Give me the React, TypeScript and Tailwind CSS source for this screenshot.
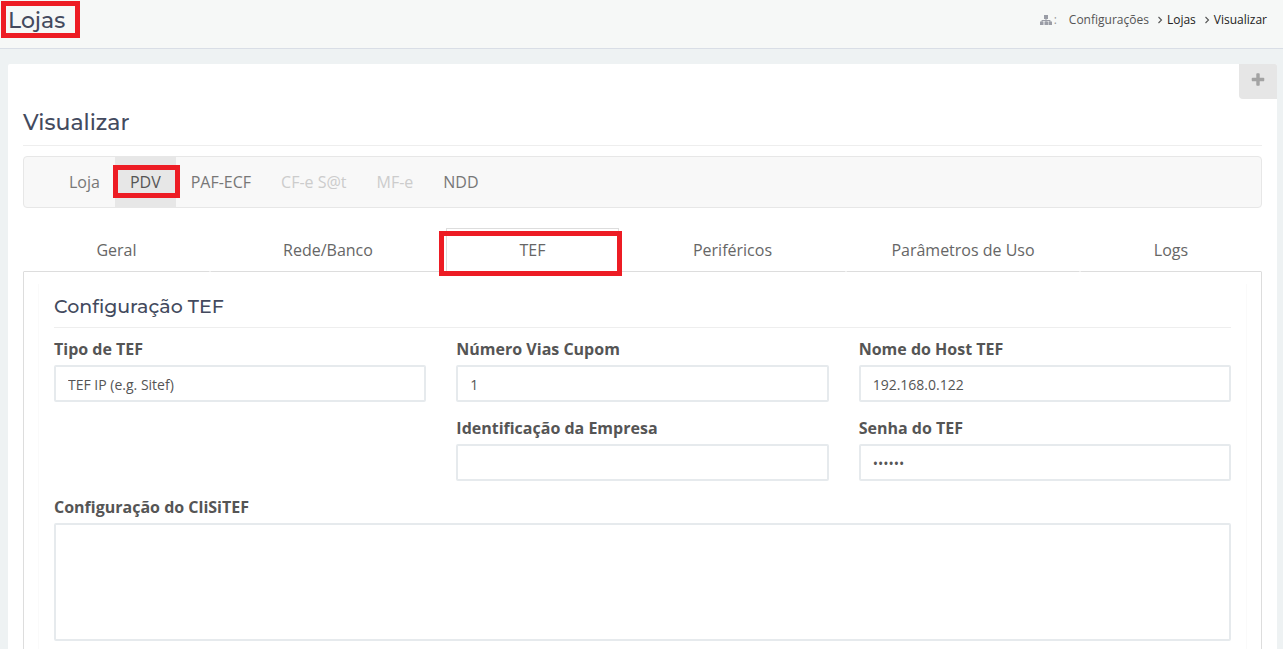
import { useState } from "react";
import clsx from "clsx";

const menu = [
  { label: "Loja" },
  { label: "PDV" },
  { label: "PAF-ECF" },
  { label: "CF-e S@t", disabled: true },
  { label: "MF-e", disabled: true },
  { label: "NDD" },
];

const tabs = ["Geral", "Rede/Banco", "TEF", "Periféricos", "Parâmetros de Uso", "Logs"];

const title = "font-['Montserrat','Inter',sans-serif] font-medium text-[#434a5e]";
const control =
  "block w-full rounded-xs border-2 border-[#e6eaed] bg-white px-3 text-sm text-[#555] outline-none focus:border-[#c5cdd3]";

function SitemapIcon() {
  return (
    <svg viewBox="0 0 12 12" className="size-3 fill-[#9a9da6]" aria-hidden="true">
      <path d="M4 1h4v4H6.5v1H10q.5 0 .5.5V7.5H12V11H8.5V7.5h1V7h-3v.5H8V11H4.5V7.5h1V7h-3v.5h1V11H0V7.5h1.5v-1q0-.5.5-.5h3.5V5H4z" />
    </svg>
  );
}

function PlusIcon() {
  return (
    <svg viewBox="0 0 1792 1792" className="size-4 fill-[#a3a3a3]" aria-hidden="true">
      <path d="M1600 736v192q0 40-28 68t-68 28h-416v416q0 40-28 68t-68 28h-192q-40 0-68-28t-28-68v-416h-416q-40 0-68-28t-28-68v-192q0-40 28-68t68-28h416v-416q0-40 28-68t68-28h192q40 0 68 28t28 68v416h416q40 0 68 28t28 68z" />
    </svg>
  );
}

function Chevron() {
  return (
    <svg viewBox="0 0 6 8" className="mr-1 ml-2 h-2 w-1.5 fill-none stroke-[#555]" aria-hidden="true">
      <path d="M1.5 1 4.5 4 1.5 7" strokeWidth="1.1" />
    </svg>
  );
}

// red frame drawn over the element it calls out
function Highlight({ className }: { className: string }) {
  return <span className={clsx("pointer-events-none absolute z-10 border-5 border-[#ed1c24]", className)} />;
}

function Field({
  id,
  label,
  value = "",
  type = "text",
  className,
}: {
  id: string;
  label: string;
  value?: string;
  type?: string;
  className?: string;
}) {
  return (
    <div className={className}>
      <label htmlFor={id} className="mb-1 block leading-6 font-bold">
        {label}
      </label>
      <input id={id} type={type} defaultValue={value} className={clsx(control, "h-[37px] pt-0.5")} />
    </div>
  );
}

export default function App() {
  const [section, setSection] = useState("PDV");
  const [tab, setTab] = useState("TEF");

  return (
    <div className="flex min-h-screen flex-col bg-[#eef2f3] font-['Open_Sans',sans-serif] text-base text-[#555]">
      <header className="flex h-[49px] items-start justify-between border-b border-[#d9dee6] bg-[#f6f8f7] pr-4">
        <div className="relative px-2 pt-[5px]">
          <h1 className={clsx(title, "text-[22px] leading-8")}>Lojas</h1>
          <Highlight className="top-px left-px h-[37px] w-[79px]" />
        </div>
        <nav aria-label="Trilha" className="flex h-10 items-center text-xs">
          <SitemapIcon />
          <span className="mr-3 ml-0.5 text-[#999]">:</span>
          <a href="#configuracoes">Configurações</a>
          <Chevron />
          <a href="#lojas" className="text-[#222]">Lojas</a>
          <Chevron />
          <a href="#visualizar" className="text-[#222]">Visualizar</a>
        </nav>
      </header>

      <main className="relative mt-[15px] mr-1.5 ml-2 flex grow flex-col rounded-t-xs bg-white px-[15px]">
        <button
          type="button"
          aria-label="Adicionar"
          className="absolute top-0 right-0 flex h-[35px] w-[38px] items-center justify-center rounded-tr-xs rounded-bl-sm bg-[#e6e6e6] pb-[3px]"
        >
          <PlusIcon />
        </button>

        <h2 className={clsx(title, "border-b border-[#eee] pt-[43px] pb-1.5 text-[22px] leading-8")}>Visualizar</h2>

        <nav aria-label="Seções" className="mt-2.5 flex h-[52px] rounded-sm border border-[#e7e7e7] bg-[#f8f8f8] pl-[30px]">
          {menu.map(({ label, disabled }) => (
            <div key={label} className="relative flex">
              <button
                type="button"
                disabled={disabled}
                onClick={() => setSection(label)}
                className={clsx(
                  "px-[15px]",
                  disabled ? "text-[#ccc]" : section === label ? "bg-[#e7e7e7] text-[#555]" : "text-[#777]",
                )}
              >
                {label}
              </button>
              {label === "PDV" && <Highlight className="top-2 -right-1 -left-0.5 h-[33px]" />}
            </div>
          ))}
        </nav>

        <div role="tablist" className="mt-5 grid grid-cols-[187fr_236fr_173fr_227fr_234fr_182fr]">
          {tabs.map((label) => (
            <div key={label} className="relative">
              <button
                type="button"
                role="tab"
                aria-selected={tab === label}
                onClick={() => setTab(label)}
                className={clsx(
                  "h-11 w-full border text-[#666]",
                  tab === label ? "border-[#ddd] border-b-white" : "border-transparent border-b-[#ddd]",
                )}
              >
                {label}
              </button>
              {label === "TEF" && <Highlight className="top-[3px] -right-[3px] -left-[7px] h-[45px]" />}
            </div>
          ))}
        </div>

        <div role="tabpanel" className="flex grow flex-col border-x border-[#ddd] px-3.5 pt-3">
          <form className="grow border-x border-[#fafafa] px-[15px] pb-2" onSubmit={(e) => e.preventDefault()}>
            <h3 className={clsx(title, "border-b border-[#eee] pt-2 pb-1.5 text-[19px] leading-[29px]")}>
              Configuração TEF
            </h3>
            <div className="mt-[9px] grid grid-cols-3 gap-x-[30px] gap-y-3.5">
              <Field id="tipo" label="Tipo de TEF" value="TEF IP (e.g. Sitef)" />
              <Field id="vias" label="Número Vias Cupom" value="1" />
              <Field id="host" label="Nome do Host TEF" value="192.168.0.122" />
              <Field id="empresa" label="Identificação da Empresa" className="col-start-2" />
              <Field id="senha" label="Senha do TEF" type="password" value="123456" />
              <div className="col-span-3">
                <label htmlFor="clisitef" className="mb-1 block leading-6 font-bold">
                  Configuração do CliSiTEF
                </label>
                <textarea id="clisitef" className={clsx(control, "h-[118px] resize-none py-2")} />
              </div>
            </div>
          </form>
        </div>
      </main>
    </div>
  );
}
